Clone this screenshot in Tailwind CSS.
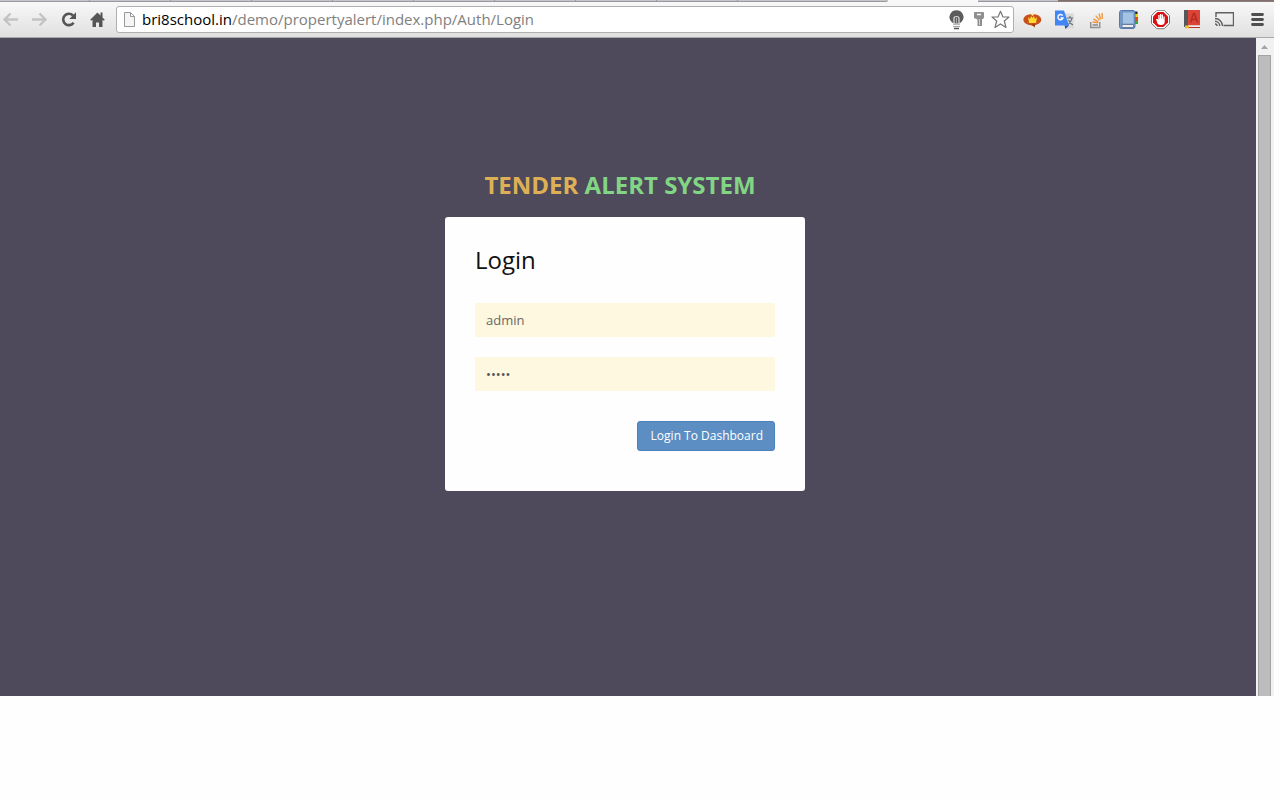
<!DOCTYPE html>
<html lang="en">
<head>
<meta charset="utf-8">
<title>Tender Alert System - Login</title>
<script src="https://cdn.jsdelivr.net/npm/@tailwindcss/browser@4"></script>
</head>
<body class="flex min-h-screen flex-col bg-[#fefefe] pr-1.5 font-['Open_Sans','Noto_Sans',sans-serif]">

<!-- Bottom edge of the tab strip -->
<div class="flex h-0.5 shrink-0">
  <div class="flex w-[888px] rounded-br-xs border-b border-[#98989d] bg-[#c5c6cb]">
    <span class="w-[90px] border-r border-[#98989d]"></span>
    <span class="w-[81px] border-r border-[#98989d]"></span>
    <span class="w-[81px] border-r border-[#98989d]"></span>
    <span class="w-[81px] border-r border-[#98989d]"></span>
    <span class="w-[81px] border-r border-[#98989d]"></span>
    <span class="w-[81px] border-r border-[#98989d]"></span>
    <span class="w-[81px] border-r border-[#98989d]"></span>
    <span class="w-[81px] border-r border-[#98989d]"></span>
    <span class="w-[81px] border-r border-[#98989d]"></span>
  </div>
  <div class="w-[90px] bg-[#f8f8f8]"></div>
  <div class="w-20 border-b border-[#98989d] bg-[#c5c6cb]"></div>
  <div class="flex-1 border-b border-[#8b7c7c] bg-[#84716f]"></div>
</div>

<header class="flex h-9 shrink-0 items-center border-b border-[#a9a9ab] bg-linear-to-b from-[#f8f8f8] to-[#e0e0e0] pr-2 pl-[3px]">
  <nav class="flex gap-[13px]">
    <button aria-label="Back"><svg class="block size-4" viewBox="0 0 16 16" fill="none" stroke="#c3c3c3" stroke-width="2.4"><path d="M15 7.500H1.500M7.500 1.500l-6 6 6 6"/></svg></button>
    <button aria-label="Forward"><svg class="block size-4" viewBox="0 0 16 16" fill="none" stroke="#c3c3c3" stroke-width="2.4"><path d="M0 7.500h13.500M7.500 1.500l6 6-6 6"/></svg></button>
    <button aria-label="Reload"><svg class="block size-4" viewBox="0 0 16 16"><path d="M12.600 10.700A5.700 5.700 0 1 1 12 3.500" fill="none" stroke="#555" stroke-width="2.600"/><path d="M15 .3v6.700H8.300z" fill="#555"/></svg></button>
    <button aria-label="Home"><svg class="block size-4" viewBox="0 0 16 16" fill="#555"><path d="M7.500.5.200 7.800l1 1 1.300-1.100V15h3.500v-4.500h3V15h3.500V7.700l1.300 1.100 1-1-2.300-2.300V.5h-2v3z"/></svg></button>
  </nav>

  <div class="ml-2.5 flex h-[27px] min-w-0 flex-1 items-center rounded-[3px] border border-[#b0b0b0] bg-white pr-[3px] pl-1">
    <svg class="size-4 shrink-0" viewBox="0 0 16 16" fill="#f5f5f5" stroke="#999"><path d="M3.500.500h6l4 4v10h-10zM9.500.500v4h4"/></svg>
    <p class="ml-[5px] flex-1 pb-0.5 text-[15px] leading-6 whitespace-nowrap text-[#808080]"><span class="text-black">bri8school.in</span>/demo/propertyalert/index.php/Auth/Login</p>
    <div class="flex items-center gap-1">
      <button aria-label="Lights off"><svg class="block size-5" viewBox="0 0 20 20"><path d="M10.500.300a7 6.800 0 0 0-4.800 11.700l1.800 1.500h6l1.800-1.500A7 6.800 0 0 0 10.500.3z" fill="#5c5c5c"/><path d="M8 14V8.500q0-2 2.500-2t2.500 2V14" fill="none" stroke="#ddd" stroke-width="1.200"/><path d="M10.500 8v6" stroke="#aaa"/><path d="M7 14.500h7" stroke="#bbb"/><path d="M7 16.500h7" stroke="#aaa" stroke-width="1.200"/><path d="M8 18.500h5" stroke="#555" stroke-width="1.500"/></svg></button>
      <button aria-label="Saved password"><svg class="block h-5 w-4" viewBox="0 0 16 20"><path d="M4.500 2h9l.5 1v5l-2 1.500V16H7.500V9.500L4 8V3z" fill="#8f8f8f"/><path d="M7 4.500h4" stroke="#fff" stroke-width="1.500"/><path d="M9.500 9v6" stroke="#d0d0d0"/></svg></button>
      <button aria-label="Bookmark this page"><svg class="block size-5" viewBox="0 0 20 20" fill="#fff" stroke="#777" stroke-width="1.200" stroke-linejoin="round"><path d="m10.500 1.300 2.500 5.700h6l-4.700 4 1.700 6.500-5.500-3.600L5 17.500 6.700 11 2 7h6z"/></svg></button>
    </div>
  </div>

  <div class="ml-2 flex gap-3">
    <button aria-label="Crown extension"><svg class="block size-5" viewBox="0 0 20 20"><ellipse cx="10.300" cy="9.700" rx="9" ry="5.800" fill="#c8501c"/><path d="M9 14.500l4 3v-4z" fill="#a33b12"/><path d="M6 7l2 2 1-3 1.500 2 1.500-2 1 3 2-2-1 6H7z" fill="#ffd92e"/><path d="M10.500 2 9 4.500 10.500 6 12 4.500z" fill="#ffe9a0"/></svg></button>
    <button aria-label="Google Translate"><svg class="block size-5" viewBox="0 0 20 20"><path d="M9 3.500h10.800v15H11z" fill="#dadada"/><path d="M13 8h6M16 6v2M18 8q-1 5-5 7M14.500 10q2 4 4.500 5" fill="none" stroke="#60757d" stroke-width="1.200"/><path d="M1 .5h9l5 15H1z" fill="#4285f4"/><path d="M10.500 15.500H15l-3.500 3.500z" fill="#2454b8"/><path d="M8.700 5.700A2.600 2.600 0 1 0 9 8H6.500" fill="none" stroke="#fff" stroke-width="1.400"/></svg></button>
    <button aria-label="Stack Overflow"><svg class="block size-5" viewBox="0 0 20 20" fill="none"><path d="M4.700 12v5.500h9V12" stroke="#919191" stroke-width="1.500"/><path d="M6.500 15h5.500" stroke="#888" stroke-width="1.500"/><path d="m6.500 12 5.500.7M7.300 8.800l5.200 3M9.700 5.600l3.800 4.800M13 3.500l1.700 6M16.200 3v6" stroke="#f09a46" stroke-width="1.400"/></svg></button>
    <button aria-label="Dictionary"><svg class="block size-5" viewBox="0 0 20 20"><path d="M17 1.500h2.500v3H17z" fill="#222"/><path d="M17 4h3v3h-3z" fill="#f3d900"/><path d="M17 7h3v4h-3z" fill="#e34a16"/><path d="M17 11h3v3h-3z" fill="#39a935"/><rect x="1.500" y=".500" width="15.500" height="18" rx="2" fill="#7599c5" stroke="#527aae"/><path d="M5 2.500h10.500v11H5z" fill="#a4c2e3"/><path d="M4 14.500h11.500v3H4z" fill="#eee" stroke="#667da0"/></svg></button>
    <button aria-label="Ad blocker"><svg class="block size-5" viewBox="0 0 20 20"><path d="M6.800.300h7.400l5.300 5.300v7.800l-5.300 5.300H6.800l-5.300-5.300V5.600z" fill="#fff" stroke="#777"/><path d="M7.500 2h6L18 6.500v6L13.500 17h-6L3 12.500v-6z" fill="#dc1010"/><path d="M6 9h1.800l.5 1V5h1.300v3.500h.4V4h1.300v4.500h.4V4.500H13V9h.4V6.500h1.300v5Q14.700 15 11 15t-4-3z" fill="#fff"/></svg></button>
    <button aria-label="Red book"><svg class="block size-5" viewBox="0 0 20 20"><path d="M2 0h4v17H2z" fill="#55585c"/><path d="M6 0h12v15.500H6z" fill="#db4437"/><path d="m8.500 12.500 3-9h1l3 9M9.500 9.500h5" fill="none" stroke="#b52d22" stroke-width="1.600"/><path d="M6 15.500h12v1.500H6z" fill="#eee"/><path d="M6 17.500h12" stroke="#b83227"/><path d="M3 15.500h4v3.500l-2-1.300L3 19z" fill="#f5b92f"/></svg></button>
    <button aria-label="Cast"><svg class="block size-5" viewBox="0 0 20 20" fill="none" stroke="#606060" stroke-width="1.400"><path d="M2 7V2.700h17.500v12.800H9.500"/><path d="M1 8.500A7.500 7.500 0 0 1 8.500 16M1 11.300A4.700 4.700 0 0 1 5.700 16M1 14a2 2 0 0 1 2 2"/></svg></button>
    <button aria-label="Menu"><svg class="block size-5" viewBox="0 0 20 20" stroke="#4e4e4e" stroke-width="2.800" stroke-linecap="round"><path d="M6.500 4.500h10M6.500 9.500h10M6.500 14.500h10"/></svg></button>
  </div>
</header>

<div class="flex h-[658px] shrink-0">
  <main class="flex flex-1 flex-col items-center bg-[#4e4a5b] pt-[129px]">
    <h1 class="mr-4 text-2xl leading-[36px] font-bold text-[#82d584]"><span class="text-[#deb056]">TENDER</span> ALERT SYSTEM</h1>
    <form class="mt-3.5 mr-1.5 flex w-full max-w-[360px] flex-col rounded-[3px] bg-[#fefefe] px-[30px] pt-[25px] pb-10">
      <h2 class="text-2xl leading-[36px] text-[#111]">Login</h2>
      <input type="text" aria-label="Username" value="admin" class="mt-[25px] h-[34px] rounded-xs bg-[#fdf8df] px-[11px] text-[13px] text-[#686868]">
      <input type="password" aria-label="Password" value="admin" class="mt-5 h-[34px] rounded-xs bg-[#fdf8df] px-[11px] text-[13px] text-[#555]">
      <button type="submit" class="mt-[30px] h-[30px] self-end rounded-[3px] border border-[#4a82bb] bg-[#5c8ec3] pr-[11px] pl-[13px] text-xs font-medium text-white">Login To Dashboard</button>
    </form>
  </main>
  <div class="flex w-[18px] flex-col bg-[#f1f1f1] px-0.5" aria-hidden="true">
    <svg class="h-[17px] w-full" viewBox="0 0 14 17"><path d="M3 11h7L6.500 7z" fill="#a3a3a3"/></svg>
    <div class="mr-px flex-1 border border-b-0 border-[#a3a3a3] bg-[#bcbcbc]"></div>
  </div>
</div>

</body>
</html>
